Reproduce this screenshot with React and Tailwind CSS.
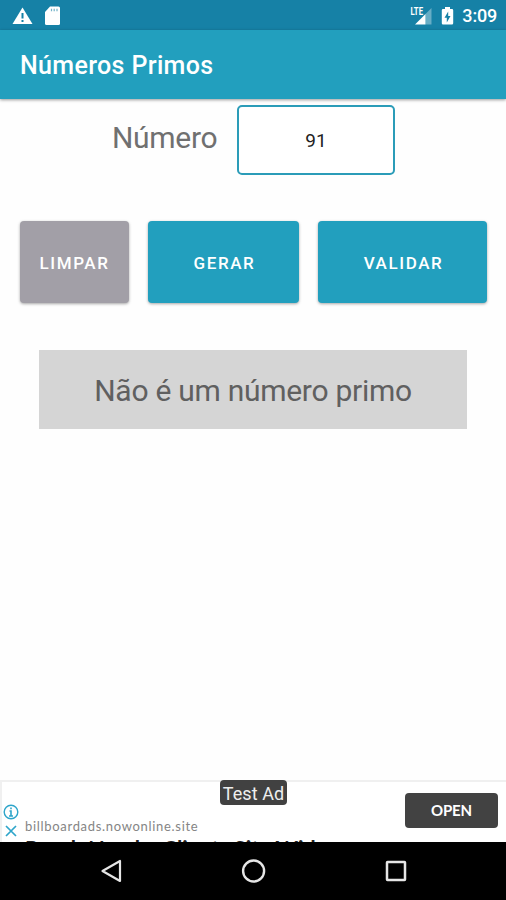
const BUTTONS = [
  { label: 'LIMPAR', box: 'w-[109px] bg-[#a29fa7]' },
  { label: 'GERAR', box: 'w-[151px] bg-[#229fbe] pl-[2px]' },
  { label: 'VALIDAR', box: 'w-[169px] bg-[#229fbe] pl-[2px]' },
];

function StatusBar() {
  return (
    <div className="flex h-[30px] shrink-0 items-center bg-[#1681a6] pt-px pl-3 pr-[9px] text-white">
      <svg width="21" height="18" viewBox="0 0 21 18">
        <path d="M10.5 0.5 L20.5 17 H0.5 Z" fill="currentColor" />
        <path d="M10.5 6 V11.5 M10.5 13 V15" stroke="#1681a6" strokeWidth="2" />
      </svg>
      <svg className="ml-[11px]" width="17" height="20" viewBox="0 0 17 20">
        <path d="M6 0.5 H14.5 Q16 0.5 16 2 V17.5 Q16 19 14.5 19 H2.5 Q1 19 1 17.5 V6 Z" fill="currentColor" />
        <path d="M7.5 2.8 V5.3 M10.2 2.8 V5.3 M13 2.8 V5.3" stroke="#1681a6" strokeWidth="1.2" opacity="0.6" />
      </svg>

      <svg className="ml-auto" width="22" height="20" viewBox="0 0 22 20">
        <path d="M21.5 2 V18.5 H15.5 V8 Z" fill="currentColor" opacity="0.35" />
        <path d="M15.5 8 V18.5 H5 Z" fill="currentColor" />
        <text x="0.5" y="9" fill="currentColor" fontSize="10.5" fontWeight="700" fontFamily="Roboto, sans-serif" textLength="12.5" lengthAdjust="spacingAndGlyphs">LTE</text>
      </svg>
      <svg className="ml-[9px]" width="13" height="20" viewBox="0 0 13 20">
        <path d="M4 1 H9 V3 H11 Q12.2 3 12.2 4.2 V17.3 Q12.2 18.5 11 18.5 H2 Q0.8 18.5 0.8 17.3 V4.2 Q0.8 3 2 3 H4 Z" fill="currentColor" />
        <path d="M7.2 5.5 L3.5 11.8 H5.8 V16.5 L9.5 10 H7.2 Z" fill="#1681a6" />
      </svg>
      <span className="ml-[8px] text-[18px] leading-[29px] font-medium tracking-[-0.2px]">3:09</span>
    </div>
  );
}

function AdBanner() {
  return (
    <div className="relative flex h-[62px] shrink-0 bg-white shadow-[inset_2px_2px_0_#f0f0f0]">
      <div className="flex w-[25px] shrink-0 flex-col items-center pt-[24px] pr-[3px] text-[#2ea5ca]">
        <svg width="16" height="16" viewBox="0 0 16 16" fill="none" stroke="currentColor" strokeWidth="1.4">
          <circle cx="8" cy="8" r="6.8" />
          <path d="M8 3.5 V5.3 M6.5 7 H8 V12 M6 12 H10" strokeWidth="1.6" />
        </svg>
        <svg className="mt-1" width="14" height="14" viewBox="0 0 14 14" stroke="currentColor" strokeWidth="1.7">
          <path d="M2 2 L12 12 M12 2 L2 12" />
        </svg>
      </div>
      <div className="flex h-full flex-col overflow-hidden whitespace-nowrap pt-[39px] font-['Lato','Open_Sans',sans-serif]">
        <span className="text-[13px] leading-[15px] tracking-[0.69px] text-[#858585]">billboardads.nowonline.site</span>
        <span className="mt-px text-[21.5px] leading-[26px] font-bold text-[#222]">Reach Nearby Clients Site Wide</span>
      </div>
      <button className="mt-[13px] mr-2 ml-auto h-[35px] w-[93px] shrink-0 rounded bg-[#424242] font-['Lato',sans-serif] text-[15px] font-bold tracking-[-0.2px] text-white">OPEN</button>
      <div className="absolute top-0 left-[220px] flex h-[25px] w-[67px] items-center justify-center rounded bg-[#414141] pt-px text-[18px] tracking-[0.1px] whitespace-nowrap text-[#eee]">
        Test Ad
      </div>
    </div>
  );
}

function NavBar() {
  return (
    <div className="flex h-[58px] shrink-0 items-center bg-black pl-[99px] text-[#e6e6e6]">
      <svg width="24" height="26" viewBox="0 0 24 26" fill="none" stroke="currentColor" strokeWidth="2.2">
        <path d="M3.5 13 L21 3 V23 Z" strokeLinejoin="round" />
      </svg>
      <svg className="ml-[118px]" width="26" height="26" viewBox="0 0 26 26" fill="none" stroke="currentColor" strokeWidth="2.4">
        <circle cx="12.6" cy="13" r="10.5" />
      </svg>
      <svg className="ml-[117px]" width="24" height="24" viewBox="0 0 24 24" fill="none" stroke="currentColor" strokeWidth="2.5">
        <rect x="3" y="3" width="18" height="18" rx="0.5" />
      </svg>
    </div>
  );
}

export default function App() {
  return (
    <div className="flex h-[900px] w-[506px] flex-col overflow-hidden bg-[#fefefe] font-['Roboto',sans-serif]">
      <StatusBar />
      <header className="flex h-[69px] shrink-0 items-center bg-[#229fbe] pt-[3px] pl-5 shadow-[0_1px_3px_rgba(0,0,0,0.4)]">
        <h1 className="text-[25px] font-medium tracking-[0.35px] text-white">Números Primos</h1>
      </header>

      <main className="flex flex-1 flex-col">
        <div className="flex pt-[6px] pl-[112px]">
          <label htmlFor="numero" className="w-[125px] pt-[12px] text-[30px] leading-[42px] tracking-[-0.3px] text-[#707070]">Número</label>
          <input
            id="numero"
            defaultValue="91"
            className="h-[70px] w-[158px] rounded-[5px] border-2 border-[#2b9cb8] bg-white text-center text-[19px] text-[#222] outline-none"
          />
        </div>

        <div className="mt-[46px] flex gap-[19px] pl-5">
          {BUTTONS.map(({ label, box }) => (
            <button
              key={label}
              className={`h-[82px] rounded-[4px] pt-[4px] text-[17px] font-medium tracking-[1.6px] text-white shadow-[0_1px_3px_rgba(0,0,0,0.35)] ${box}`}
            >
              {label}
            </button>
          ))}
        </div>

        <div className="mx-[39px] mt-[47px] flex h-[79px] items-center justify-center bg-[#d5d5d5] pt-[2px] text-[30px] tracking-[-0.28px] text-[#606060]">
          Não é um número primo
        </div>
      </main>

      <AdBanner />
      <NavBar />
    </div>
  );
}
